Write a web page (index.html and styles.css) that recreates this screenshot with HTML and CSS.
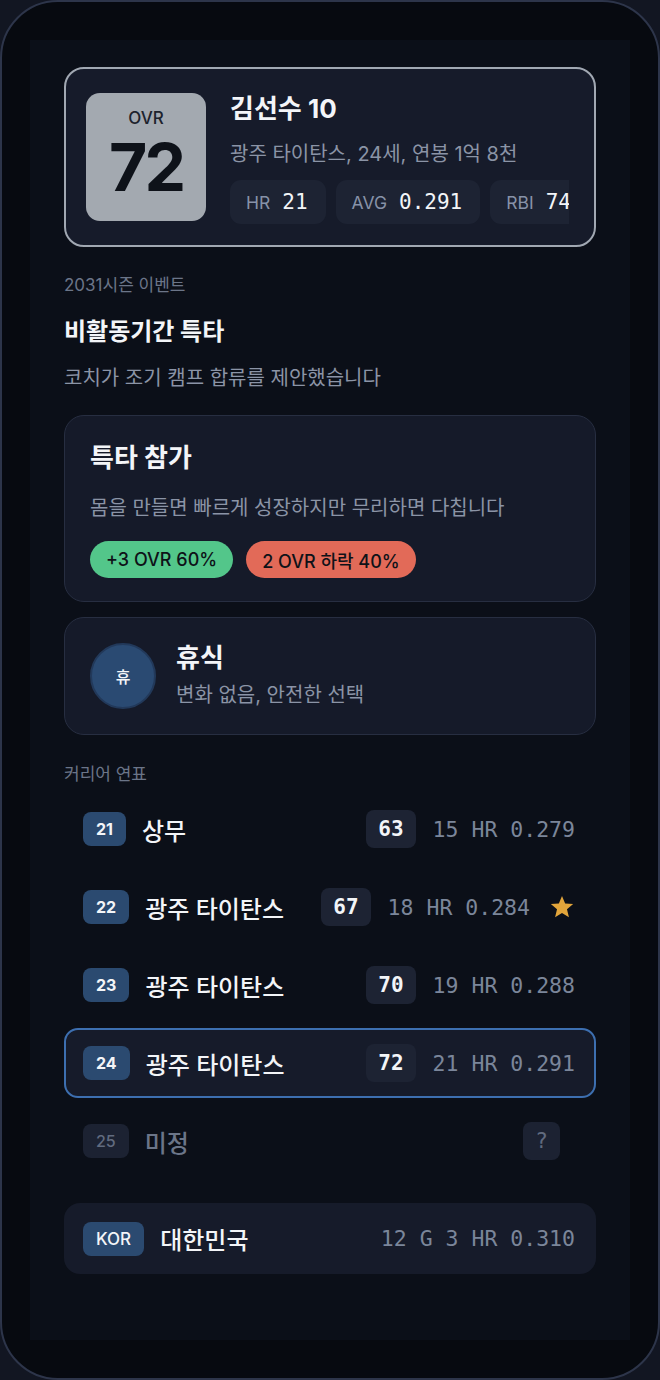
FILE: index.html
```html
<!DOCTYPE html>
<html lang="ko">
  <head>
    <meta charset="UTF-8" />
    <meta name="viewport" content="width=device-width, initial-scale=1.0" />
    <title>선수 커리어</title>
    <link rel="stylesheet" href="styles.css">
  </head>

  <body>
    <div class="phone">
      <div class="screen">
        <div class="player-card">
          <div class="ovr-box">
            <span class="ovr-label">OVR</span>
            <span class="ovr-value">72</span>
          </div>
          <div class="player-info">
            <h1 class="player-name">김선수 10</h1>
            <p class="player-meta">광주 타이탄스, 24세, 연봉 1억 8천</p>
            <div class="stat-chips">
              <div class="chip"><span class="chip-label">HR</span><span class="chip-value">21</span></div>
              <div class="chip"><span class="chip-label">AVG</span><span class="chip-value">0.291</span></div>
              <div class="chip"><span class="chip-label">RBI</span><span class="chip-value">74</span></div>
            </div>
          </div>
        </div>

        <p class="section-label event-label">2031시즌 이벤트</p>
        <h2 class="event-title">비활동기간 특타</h2>
        <p class="event-desc">코치가 조기 캠프 합류를 제안했습니다</p>

        <div class="option option-train">
          <h3 class="option-title">특타 참가</h3>
          <p class="option-desc">몸을 만들면 빠르게 성장하지만 무리하면 다칩니다</p>
          <div class="pills">
            <span class="pill pill-good">+3 OVR 60%</span>
            <span class="pill pill-bad">2 OVR 하락 40%</span>
          </div>
        </div>

        <div class="option option-rest">
          <div class="rest-icon">휴</div>
          <div>
            <h3 class="option-title rest-title">휴식</h3>
            <p class="option-desc">변화 없음, 안전한 선택</p>
          </div>
        </div>

        <p class="section-label career-label">커리어 연표</p>
        <div class="timeline">
          <div class="season">
            <span class="age">21</span>
            <span class="team">상무</span>
            <div class="season-right">
              <span class="season-ovr">63</span>
              <span class="season-stats">15 HR 0.279</span>
            </div>
          </div>
          <div class="season">
            <span class="age">22</span>
            <span class="team">광주 타이탄스</span>
            <div class="season-right">
              <span class="season-ovr">67</span>
              <span class="season-stats">18 HR 0.284</span>
              <svg class="star" viewBox="0 0 24 24" width="26" height="26">
                <polygon points="12,1.8 14.9,8.7 22.3,9.3 16.6,14.1 18.4,21.4 12,17.5 5.6,21.4 7.4,14.1 1.7,9.3 9.1,8.7" fill="#e2a53b" />
              </svg>
            </div>
          </div>
          <div class="season">
            <span class="age">23</span>
            <span class="team">광주 타이탄스</span>
            <div class="season-right">
              <span class="season-ovr">70</span>
              <span class="season-stats">19 HR 0.288</span>
            </div>
          </div>
          <div class="season current">
            <span class="age">24</span>
            <span class="team">광주 타이탄스</span>
            <div class="season-right">
              <span class="season-ovr">72</span>
              <span class="season-stats">21 HR 0.291</span>
            </div>
          </div>
          <div class="season future">
            <span class="age">25</span>
            <span class="team">미정</span>
            <div class="season-right">
              <span class="season-ovr">?</span>
              <span class="season-stats"></span>
            </div>
          </div>
        </div>

        <div class="national">
          <span class="age nation-code">KOR</span>
          <span class="team">대한민국</span>
          <span class="season-stats national-stats">12 G 3 HR 0.310</span>
        </div>
      </div>
    </div>
  </body>
</html>
```

FILE: styles.css
```css
body {
  margin: 0;
  background-color: #121622;
  font-family: Inter, "Noto Sans CJK KR", sans-serif;
  color: #f3f5f8;
}

h1,
h2,
h3,
p {
  margin: 0;
}

.phone {
  width: 660px;
  height: 1380px;
  box-sizing: border-box;
  border: 2px solid #2d354a;
  border-radius: 58px;
  background-color: #070a10;
  padding: 38px 28px;
}

.screen {
  height: 1300px;
  background-color: #0b0f18;
  padding: 27px 34px 0;
  box-sizing: border-box;
}

/* player card */

.player-card {
  display: flex;
  align-items: flex-start;
  gap: 24px;
  padding: 24px 25px 21px 20px;
  border: 2px solid #a1a8b2;
  border-radius: 20px;
  background-color: #161b2a;
}

.ovr-box {
  width: 120px;
  height: 128px;
  flex-shrink: 0;
  box-sizing: border-box;
  padding-top: 15px;
  display: flex;
  flex-direction: column;
  align-items: center;
  border-radius: 14px;
  background-color: #a3a9b0;
  color: #0e1219;
}

.ovr-label {
  font-size: 17px;
  font-weight: 500;
  line-height: 20px;
  margin-bottom: 4px;
  color: #1d232d;
}

.ovr-value {
  font-size: 66px;
  font-weight: 700;
  line-height: 70px;
  letter-spacing: -3px;
}

.player-info {
  flex: 1;
  min-width: 0;
  overflow: hidden;
}

.player-name {
  font-size: 26px;
  font-weight: 700;
  line-height: 32px;
}

.player-meta {
  margin-top: 16px;
  font-size: 20px;
  line-height: 27px;
  color: #8b94a6;
}

.stat-chips {
  display: flex;
  gap: 10px;
  margin-top: 12px;
}

.chip {
  flex-shrink: 0;
  display: flex;
  align-items: center;
  gap: 12px;
  height: 44px;
  padding: 0 18px 0 16px;
  border-radius: 11px;
  background-color: #1d2333;
}

.chip-label {
  font-size: 17.5px;
  color: #8792a8;
}

.chip-value {
  font-family: "DejaVu Sans Mono", monospace;
  font-size: 21px;
  color: #f3f5f8;
}

/* event */

.section-label {
  font-size: 17px;
  line-height: 22px;
  color: #6b7588;
}

.event-label {
  margin-top: 27px;
}

.event-title {
  margin-top: 20px;
  font-size: 24px;
  font-weight: 700;
  line-height: 32px;
}

.event-desc {
  margin-top: 16px;
  font-size: 20px;
  line-height: 28px;
  color: #8b94a6;
}

.option {
  border: 1px solid #272e41;
  border-radius: 20px;
  background-color: #151a29;
}

.option-train {
  margin-top: 23px;
  padding: 25px 25px 23px;
}

.option-title {
  font-size: 26px;
  font-weight: 700;
  line-height: 33px;
}

.option-desc {
  font-size: 20px;
  line-height: 28px;
  color: #8b94a6;
}

.option-train .option-desc {
  margin-top: 20px;
}

.pills {
  display: flex;
  gap: 13px;
  margin-top: 19px;
}

.pill {
  height: 37px;
  display: flex;
  align-items: center;
  padding: 0 16px;
  border-radius: 19px;
  font-size: 18px;
  font-weight: 500;
  color: #0e1218;
}

.pill-good {
  background-color: #53c68a;
}

.pill-bad {
  background-color: #e26a58;
}

.option-rest {
  margin-top: 15px;
  height: 118px;
  box-sizing: border-box;
  padding: 0 25px;
  display: flex;
  align-items: center;
  gap: 20px;
}

.rest-icon {
  width: 66px;
  height: 66px;
  flex-shrink: 0;
  box-sizing: border-box;
  border: 2px solid #22395a;
  border-radius: 50%;
  background-color: #2a4a72;
  display: flex;
  align-items: center;
  justify-content: center;
  font-size: 16px;
  font-weight: 500;
}

.rest-title {
  line-height: 30px;
  margin-bottom: 8px;
}

/* career timeline */

.career-label {
  margin-top: 28px;
}

.timeline {
  margin-top: 9px;
  display: flex;
  flex-direction: column;
  gap: 8px;
}

.season {
  height: 70px;
  box-sizing: border-box;
  display: flex;
  align-items: center;
  gap: 16px;
  padding: 0 19px 0 17px;
  border: 2px solid transparent;
  border-radius: 14px;
}

.season.current {
  border-color: #3d6fb0;
  background-color: #161b2a;
}

.age {
  height: 34px;
  display: flex;
  align-items: center;
  padding: 0 13px;
  border-radius: 8px;
  background-color: #2b4a70;
  font-size: 16px;
  font-weight: 700;
  color: #f3f5f8;
}

.team {
  font-size: 24px;
  font-weight: 500;
}

.season-right {
  margin-left: auto;
  display: flex;
  align-items: center;
  gap: 17px;
}

.season-ovr {
  height: 38px;
  min-width: 24px;
  display: flex;
  align-items: center;
  justify-content: center;
  padding: 0 12px;
  border-radius: 8px;
  background-color: #1d2333;
  font-family: "DejaVu Sans Mono", monospace;
  font-size: 21px;
  font-weight: 700;
  color: #f3f5f8;
}

.season-stats {
  font-family: "DejaVu Sans Mono", monospace;
  font-size: 21.5px;
  color: #7b869a;
}

.star {
  margin-left: 2px;
}

.season.future .season-right {
  gap: 15px;
}

.season.future .age {
  background-color: #1c2232;
  color: #616b7f;
  font-weight: 500;
}

.season.future .team {
  color: #6b7588;
}

.season.future .season-ovr {
  min-width: 12px;
  background-color: #1c2232;
  color: #616b7f;
  font-weight: 400;
}

/* national team */

.national {
  margin-top: 27px;
  height: 71px;
  box-sizing: border-box;
  display: flex;
  align-items: center;
  gap: 16px;
  padding: 0 21px 0 19px;
  border-radius: 16px;
  background-color: #161b2a;
}

.nation-code {
  font-size: 17px;
  font-weight: 500;
  padding: 0 13px;
}

.national-stats {
  margin-left: auto;
}
```
